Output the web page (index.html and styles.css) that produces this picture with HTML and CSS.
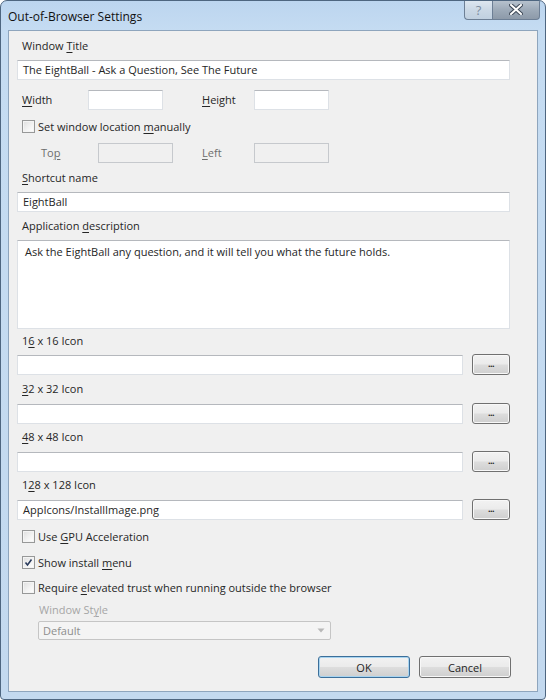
FILE: index.html
```html
<!DOCTYPE html>
<html>
<head>
<meta charset="utf-8">
<link rel="stylesheet" href="styles.css">
</head>
<body>
<div class="window">
  <div class="titlebar">
    <span class="title">Out-of-Browser Settings</span>
    <div class="caption-btns">
      <div class="cap help">?</div>
      <div class="cap close">
        <svg width="14" height="11" viewBox="0 0 14 11"><path d="M2 1 L12 10 M12 1 L2 10" stroke="#3f4a58" stroke-width="4" stroke-linecap="square"/><path d="M2 1 L12 10 M12 1 L2 10" stroke="#ffffff" stroke-width="2" stroke-linecap="square"/></svg>
      </div>
    </div>
  </div>
  <div class="client">
    <div class="label m7">Window <u>T</u>itle</div>
    <div class="input wide m6">The EightBall - Ask a Question, See The Future</div>

    <div class="row m10">
      <span class="label lw1"><u>W</u>idth</span>
      <span class="input small"></span>
      <span class="label lw2"><u>H</u>eight</span>
      <span class="input small"></span>
    </div>

    <div class="check m8"><span class="box"></span><span>Set window location <u>m</u>anually</span></div>

    <div class="row m9">
      <span class="label lw3 disabled">To<u>p</u></span>
      <span class="input small dis"></span>
      <span class="label lw4 disabled"><u>L</u>eft</span>
      <span class="input small dis"></span>
    </div>

    <div class="label m7"><u>S</u>hortcut name</div>
    <div class="input wide m6">EightBall</div>

    <div class="label m6">Application <u>d</u>escription</div>
    <div class="input wide area m6">Ask the EightBall any question, and it will tell you what the future holds.</div>

    <div class="label m4">1<u>6</u> x 16 Icon</div>
    <div class="filerow m5"><span class="input file"></span><span class="btn browse">...</span></div>

    <div class="label m6"><u>3</u>2 x 32 Icon</div>
    <div class="filerow m6"><span class="input file"></span><span class="btn browse">...</span></div>

    <div class="label m5"><u>4</u>8 x 48 Icon</div>
    <div class="filerow m6"><span class="input file"></span><span class="btn browse">...</span></div>

    <div class="label m5">1<u>2</u>8 x 128 Icon</div>
    <div class="filerow m6"><span class="input file">AppIcons/InstallImage.png</span><span class="btn browse">...</span></div>

    <div class="check m8"><span class="box"></span><span>Use <u>G</u>PU Acceleration</span></div>
    <div class="check m10"><span class="box checked"><svg width="9" height="9" viewBox="0 0 9 9"><path d="M1.5 4.5 L3.5 7 L7.5 1.5" fill="none" stroke="#2a3b5c" stroke-width="1.6"/></svg></span><span>Show install <u>m</u>enu</span></div>
    <div class="check m9"><span class="box"></span><span>Require <u>e</u>levated trust when running outside the browser</span></div>

    <div class="label sub m7 faint">Window St<u>y</u>le</div>
    <div class="combo m3"><span>Default</span><svg width="8" height="5" viewBox="0 0 8 5"><path d="M0.5 0.5 L4 4.5 L7.5 0.5 Z" fill="#b8b8b8"/></svg></div>

    <div class="buttons m16">
      <span class="btn dlg default">OK</span>
      <span class="btn dlg">Cancel</span>
    </div>
  </div>
</div>
</body>
</html>
```

FILE: styles.css
```css
* { box-sizing: border-box; }
html, body { margin: 0; padding: 0; background: #ffffff; }
body {
  font-family: "Open Sans", "Noto Sans", "DejaVu Sans", sans-serif;
  font-size: 11px;
  color: #262626;
}
u { text-decoration: underline; text-underline-offset: 2px; }

.window {
  width: 546px;
  height: 700px;
  border: 1px solid #4e6680;
  border-radius: 7px 7px 4px 4px;
  background: linear-gradient(180deg, #bcd5ef 0px, #c5dcf2 30px, #c3d9ef 100%);
  display: flex;
  flex-direction: column;
  overflow: hidden;
}

.titlebar {
  height: 29px;
  display: flex;
  align-items: flex-start;
  justify-content: space-between;
  flex-shrink: 0;
}
.title {
  font-size: 12px;
  color: #111;
  padding-left: 7px;
  line-height: 29px;
  padding-top: 1px;
}
.caption-btns {
  display: flex;
  margin-right: 5px;
  margin-top: -1px;
}
.cap {
  height: 20px;
  border: 1px solid #6d7f95;
  border-top: none;
  display: flex;
  align-items: center;
  justify-content: center;
}
.help {
  width: 28px;
  border-radius: 0 0 0 4px;
  border-right: none;
  background: linear-gradient(180deg, #dfe8f1 0%, #ccd9e6 50%, #c0d0e0 100%);
  color: #7d8da0;
  font-size: 13px;
}
.close {
  width: 48px;
  border-radius: 0 0 4px 0;
  background: linear-gradient(180deg, #b9c4d0 0%, #9eabb9 50%, #8d9aa9 100%);
}

.client {
  margin: 0 7px 7px 7px;
  flex: 1;
  background: #f0f0f0;
  border: 1px solid #8ea5bd;
  padding: 0 27px 0 8px;
  display: flex;
  flex-direction: column;
}

.m3 { margin-top: 3px; }
.m4 { margin-top: 4px; }
.m5 { margin-top: 5px; }
.m6 { margin-top: 6px; }
.m7 { margin-top: 7px; }
.m8 { margin-top: 8px; }
.m9 { margin-top: 9px; }
.m10 { margin-top: 10px; }
.m16 { margin-top: 16px; }

.label {
  height: 16px;
  line-height: 16px;
  padding-left: 5px;
  white-space: nowrap;
}
.label.sub { padding-left: 22px; }
.disabled { color: #6d6d6d; }
.faint { color: #a6a6a6; }

.input {
  display: block;
  height: 20px;
  background: #ffffff;
  border: 1px solid #dde1e6;
  border-top-color: #b5b8bd;
  line-height: 18px;
  padding-left: 5px;
  white-space: nowrap;
}
.input.wide { width: 493px; }
.input.area { height: 89px; padding-left: 7px; padding-top: 2px; }
.input.small { width: 75px; }
.input.dis { background: #f0f0f0; border-color: #c6c9cd; }

.row {
  display: flex;
  align-items: center;
  height: 20px;
}
.lw1 { width: 71px; }
.lw2 { width: 52px; padding-left: 0; margin-left: 39px; }
.lw3 { width: 81px; padding-left: 24px; }
.lw4 { width: 52px; padding-left: 0; margin-left: 29px; }

.check {
  display: flex;
  align-items: center;
  height: 16px;
  padding-left: 5px;
  white-space: nowrap;
}
.box {
  width: 13px;
  height: 13px;
  border: 1px solid #979898;
  background: linear-gradient(135deg, #dedede 0%, #f4f4f4 60%, #ffffff 100%);
  box-shadow: inset 0 0 0 1px #f4f4f4;
  margin-right: 3px;
  display: flex;
  align-items: center;
  justify-content: center;
}

.filerow {
  display: flex;
  align-items: center;
  height: 21px;
}
.input.file { width: 446px; }

.btn {
  display: flex;
  align-items: center;
  justify-content: center;
  border: 1px solid #707070;
  border-radius: 3px;
  background: linear-gradient(180deg, #f2f2f2 0%, #ebebeb 48%, #dddddd 52%, #cfcfcf 100%);
  box-shadow: inset 0 0 0 1px #f8f8f8;
  color: #1e1e1e;
}
.browse {
  width: 38px;
  height: 21px;
  margin-left: 9px;
  font-size: 9px;
  font-weight: bold;
  line-height: 1;
  padding-bottom: 2px;
  letter-spacing: -0.5px;
}

.combo {
  margin-left: 21px;
  width: 293px;
  height: 19px;
  border: 1px solid #c5c5c5;
  border-radius: 2px;
  background: #f4f4f4;
  color: #8d8d8d;
  display: flex;
  align-items: center;
  justify-content: space-between;
  padding: 0 5px 0 4px;
}

.buttons {
  display: flex;
  justify-content: flex-end;
  gap: 9px;
  margin-right: -1px;
}
.dlg {
  width: 92px;
  height: 22px;
}
.default {
  border-color: #3c6f9a;
  box-shadow: inset 0 0 0 1px #a8d4f0;
}
```
